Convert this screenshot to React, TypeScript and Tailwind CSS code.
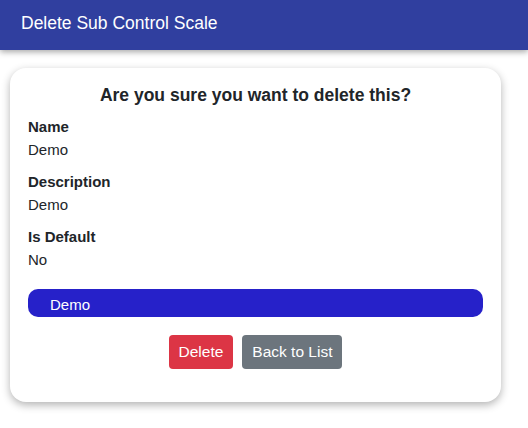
export default function App() {
  const fields = [
    { label: "Name", value: "Demo" },
    { label: "Description", value: "Demo" },
    { label: "Is Default", value: "No" },
  ];

  return (
    <div className="min-h-[428px] bg-white font-['Liberation_Sans',Arial,sans-serif] text-[#212529]">
      {/* Header */}
      <header className="h-[50px] bg-[#303f9f] flex items-center pl-[21px] pb-[4px] shadow-[0_2px_6px_rgba(0,0,0,0.35)]">
        <h1 className="text-white text-[17.5px]">Delete Sub Control Scale</h1>
      </header>

      <div className="px-[10px] pt-[18px]">
        <div className="w-[491px] rounded-[16px] bg-white shadow-[0_3px_8px_rgba(0,0,0,0.3)] px-[18px] pt-[16px] pb-[33px]">
          <h2 className="text-center font-bold text-[17.5px] leading-[23px]">
            Are you sure you want to delete this?
          </h2>

          <div className="mt-[9px] flex flex-col gap-[10px]">
            {fields.map((f) => (
              <div key={f.label} className="text-[15px]">
                <div className="font-bold leading-[22px]">{f.label}</div>
                <div className="leading-[23px]">{f.value}</div>
              </div>
            ))}
          </div>

          <div className="mt-[18px] h-[28px] rounded-[10px] bg-[#2621c9] text-white text-[15px] flex items-end pb-[1px] pl-[22px]">
            Demo
          </div>

          <div className="mt-[18px] flex justify-center gap-[9px]">
            <button className="h-[34px] px-[10px] rounded-[4px] bg-[#dc3545] text-white text-[15.5px]">
              Delete
            </button>
            <button className="h-[34px] px-[10px] rounded-[4px] bg-[#6c757d] text-white text-[15.5px]">
              Back to List
            </button>
          </div>
        </div>
      </div>
    </div>
  );
}
